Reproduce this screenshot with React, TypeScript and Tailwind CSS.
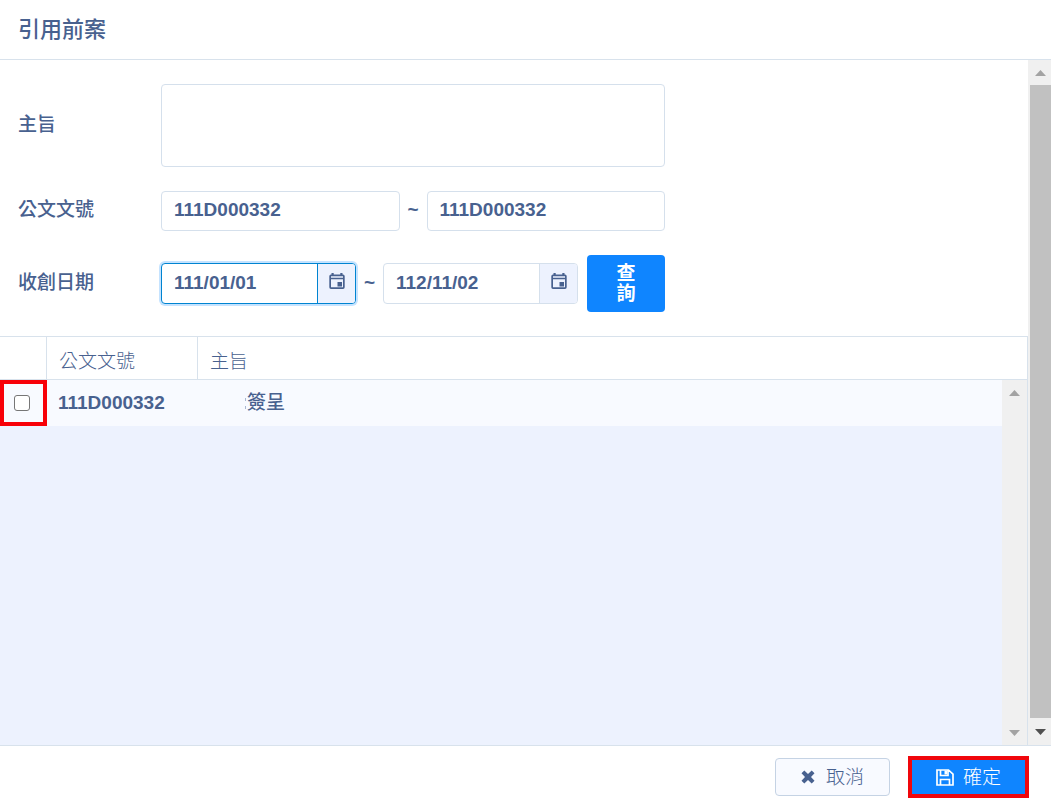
import { useId, type ReactNode } from "react";

function Field({ label, htmlFor, children }: { label: string; htmlFor: string; children: ReactNode }) {
  return (
    <div className="flex items-center">
      <label htmlFor={htmlFor} className="w-[143px] shrink-0 pb-0.5">
        {label}
      </label>
      <div className="flex w-[504px] items-center">{children}</div>
    </div>
  );
}

function Tilde() {
  return <span className="w-[27px] shrink-0 pb-0.5 text-center font-bold">~</span>;
}

function CalendarIcon() {
  return (
    <svg width="16" height="17" viewBox="0 0 16 17" className="fill-current" aria-hidden="true">
      <path
        fillRule="evenodd"
        d="M2.500 0h2.200v1.500h6.600V0h2.200v1.500H14A1.700 1.700 0 0 1 15.700 3.200v11.100A1.700 1.700 0 0 1 14 16H2A1.700 1.700 0 0 1 .3 14.300V3.200A1.700 1.700 0 0 1 2 1.500h.5zM2 3.300v1.400h12V3.300zM2 6.300v8h12v-8z"
      />
      <path d="M8.500 9h4.500v4.500H8.500z" />
    </svg>
  );
}

function DateInput({ id, label, value, focused }: { id?: string; label: string; value: string; focused?: boolean }) {
  const frame = focused ? "border-sky-600 shadow-[0_0_0_2px_#c5e3ff]" : "border-[#d5e0ec]";
  const divider = focused ? "border-sky-600" : "border-[#d5e0ec]";
  return (
    <div className={`flex h-[41px] w-[195px] shrink-0 overflow-hidden rounded border bg-white ${frame}`}>
      <input
        id={id}
        aria-label={label}
        defaultValue={value}
        className="w-0 min-w-0 grow px-3 pb-0.5 font-bold outline-none"
      />
      <button
        type="button"
        aria-label="選擇日期"
        className={`flex w-[38px] items-center justify-center border-l bg-[#edf2fe] pb-1 ${divider}`}
      >
        <CalendarIcon />
      </button>
    </div>
  );
}

function Arrow({ down, dark }: { down?: boolean; dark?: boolean }) {
  return (
    <svg width="11" height="6" viewBox="0 0 11 6" className={dark ? "fill-[#505050]" : "fill-[#a3a3a3]"} aria-hidden="true">
      <path d={down ? "M0 0h11L5.500 6z" : "M0 6h11L5.500 0z"} />
    </svg>
  );
}

export default function App() {
  const id = useId();
  return (
    <div className="flex h-screen flex-col bg-white font-['Liberation_Sans','Noto_Sans_CJK_TC',sans-serif] text-[19px] leading-6 font-medium text-[#48618f]">
      <header className="flex h-[60px] shrink-0 items-center border-b border-[#d8e2ec] px-[18px]">
        <h1 className="text-[22px] font-medium">引用前案</h1>
      </header>

      <div className="flex min-h-0 grow">
        <main className="flex min-w-0 grow flex-col">
          <form className="flex flex-col gap-6 px-[18px] py-6" onSubmit={(e) => e.preventDefault()}>
            <Field label="主旨" htmlFor={`${id}-subject`}>
              <textarea
                id={`${id}-subject`}
                className="block h-[83px] w-full resize-none rounded border border-[#d5e0ec] px-3 py-2 outline-none"
              />
            </Field>
            <Field label="公文文號" htmlFor={`${id}-from`}>
              <input
                id={`${id}-from`}
                defaultValue="111D000332"
                className="h-10 min-w-0 flex-1 rounded border border-[#d5e0ec] px-3 pb-0.5 font-bold outline-none"
              />
              <Tilde />
              <input
                aria-label="公文文號（迄）"
                defaultValue="111D000332"
                className="h-10 min-w-0 flex-1 rounded border border-[#d5e0ec] px-3 pb-0.5 font-bold outline-none"
              />
            </Field>
            <Field label="收創日期" htmlFor={`${id}-date`}>
              <DateInput id={`${id}-date`} label="收創日期（起）" value="111/01/01" focused />
              <Tilde />
              <DateInput label="收創日期（迄）" value="112/11/02" />
              <button
                type="submit"
                className="ml-[9px] flex h-[57px] grow items-center justify-center rounded bg-[#0f85ff] leading-5 font-bold text-white"
              >
                <span className="w-5">查詢</span>
              </button>
            </Field>
          </form>

          <section className="relative grow border-t border-r border-[#d8e2ec] bg-[#edf2fe]">
            <table className="w-full table-fixed border-separate border-spacing-0 text-left">
              <thead>
                <tr className="h-[43px] bg-white">
                  <th className="w-[47px] border-r border-b border-[#d8e2ec]" aria-label="選取" />
                  <th className="w-[151px] border-r border-b border-[#d8e2ec] px-3 py-0 pt-2 font-light">公文文號</th>
                  <th className="border-b border-[#d8e2ec] px-3 py-0 pt-2 font-light">主旨</th>
                </tr>
              </thead>
              <tbody>
                <tr className="h-[46px] bg-[#f8faff]">
                  <td className="p-0">
                    <div className="flex h-[46px] items-center border-4 border-[#f80008] pl-[10px]">
                      <input
                        type="checkbox"
                        aria-label="選取 111D000332"
                        className="size-4 appearance-none rounded-[3px] border border-[#767676] bg-white"
                      />
                    </div>
                  </td>
                  <td className="px-[11px] py-0 font-bold">111D000332</td>
                  <td className="py-0 pl-[47px]">
                    <div className="flex items-center">
                      <svg width="2" height="14" viewBox="0 0 2 14" className="fill-[#a9b8d2]" aria-hidden="true">
                        <path d="M0 2h1v3H0zM0 10h1v3H0z" />
                      </svg>
                      簽呈
                    </div>
                  </td>
                </tr>
              </tbody>
            </table>
            <div className="absolute top-[43px] right-0 bottom-0 flex w-[25px] flex-col items-center justify-between bg-[#f0f0f0] pt-[10px] pb-[9px]">
              <Arrow />
              <Arrow down />
            </div>
          </section>
        </main>

        <div className="flex w-[23px] shrink-0 flex-col items-center bg-[#f0f0f0] py-[10px] pl-[2px]">
          <Arrow />
          <div className="mt-[9px] mb-[11px] w-full grow bg-[#c1c1c1]" />
          <Arrow down dark />
        </div>
      </div>

      <footer className="flex h-[59px] shrink-0 items-center justify-end gap-[18px] border-t border-[#d8e2ec] pt-1 pr-[22px] font-light">
        <button
          type="button"
          className="flex h-[38px] w-[115px] items-center justify-center gap-[11px] rounded border border-[#c5d3e4] bg-[#f8faff]"
        >
          <svg width="14" height="14" viewBox="0 0 14 14" className="fill-current" aria-hidden="true">
            <path d="M3.300 .5 7 4 10.700 .5 13.500 3.300 10 7l3.500 3.700-2.800 2.800L7 10l-3.700 3.500L.5 10.700 4 7 .5 3.300z" />
          </svg>
          <span className="pt-0.5">取消</span>
        </button>
        <button
          type="button"
          className="flex h-[42px] w-[121px] items-center justify-center gap-[9px] border-4 border-[#f0060c] bg-[#0f85ff] text-white"
        >
          <svg width="18" height="17" viewBox="0 0 18 17" fill="none" stroke="currentColor" strokeWidth="1.700" aria-hidden="true">
            <path d="M1 1h11.500L17 5.200V16H1zM4.500 1v5.500h7.500V1M4.500 16v-5.500h9V16" />
            <path d="M8.500 1.500h2.500v4H8.500z" fill="currentColor" stroke="none" />
          </svg>
          <span className="pt-0.5">確定</span>
        </button>
      </footer>
    </div>
  );
}
